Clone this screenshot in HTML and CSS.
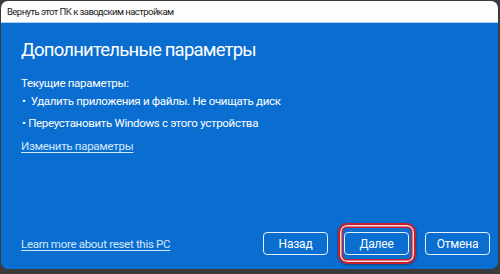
FILE: index.html
```html
<!DOCTYPE html>
<html lang="ru">

<head>
    <meta charset="UTF-8">
    <meta name="viewport" content="width=device-width, initial-scale=1.0">
    <title>Вернуть этот ПК к заводским настройкам</title>
    <link rel="stylesheet" href="styles.css">
</head>

<body>
    <div class="window">
        <div class="titlebar">Вернуть этот ПК к заводским настройкам</div>
        <div class="content">
            <h1>Дополнительные параметры</h1>
            <p class="label">Текущие параметры:</p>
            <p class="item">•&nbsp; Удалить приложения и файлы. Не очищать диск</p>
            <p class="item">• Переустановить Windows с этого устройства</p>
            <a class="link change" href="#">Изменить параметры</a>
            <div class="footer">
                <a class="link" href="#">Learn more about reset this PC</a>
                <div class="buttons">
                    <button>Назад</button>
                    <span class="highlight"><button>Далее</button></span>
                    <button>Отмена</button>
                </div>
            </div>
        </div>
    </div>
</body>

</html>
```

FILE: styles.css
```css
body {
    margin: 0;
    height: 274px;
    background: #3b3b3b;
    font-family: Roboto, "Noto Sans", sans-serif;
    overflow: hidden;
}

.window {
    margin: 1px 2px 0 1px;
    height: 268px;
    display: flex;
    flex-direction: column;
    border-radius: 7px;
    overflow: hidden;
    background: #0a6ed1;
}

.titlebar {
    height: 21px;
    background: #fdfdfd;
    border-bottom: 1px solid #a9d2f3;
    color: #1a1a1a;
    font-size: 9.5px;
    letter-spacing: -0.55px;
    line-height: 22px;
    padding-left: 6px;
}

.content {
    flex: 1;
    display: flex;
    flex-direction: column;
    padding: 13px 8px 14px 20px;
    color: white;
    letter-spacing: -0.3px;
}

h1 {
    margin: 0;
    font-size: 18.5px;
    font-weight: normal;
    letter-spacing: -0.8px;
    line-height: 28px;
}

p {
    margin: 0;
    font-size: 11.5px;
    line-height: 18px;
}

.label {
    margin-top: 10px;
}

.item {
    margin-left: 1px;
    margin-bottom: 4px;
}

.link {
    color: #d4e7fb;
    font-size: 11.5px;
    line-height: 18px;
    text-decoration: underline;
    text-underline-offset: 2px;
}

.change {
    align-self: flex-start;
    margin-top: 1px;
}

.footer {
    margin-top: auto;
    display: flex;
    align-items: center;
    justify-content: space-between;
}

.buttons {
    display: flex;
    align-items: center;
    gap: 16px;
}

button {
    width: 65px;
    height: 23px;
    padding: 0;
    border: 1.5px solid #e6f1fc;
    border-radius: 4px;
    background: #0a6ed1;
    color: white;
    font-family: inherit;
    font-size: 12px;
    letter-spacing: -0.2px;
}

.highlight {
    position: relative;
    display: flex;
}

.highlight::before {
    content: "";
    position: absolute;
    inset: -9px -7px -9px -6px;
    border: 2px solid #c81e2c;
    border-radius: 9px;
    box-shadow: inset 0 0 0 1.5px #f6d9dc, inset 0 0 0 3px #c81e2c, 0 1px 3px rgba(0, 0, 0, 0.4);
}
```
